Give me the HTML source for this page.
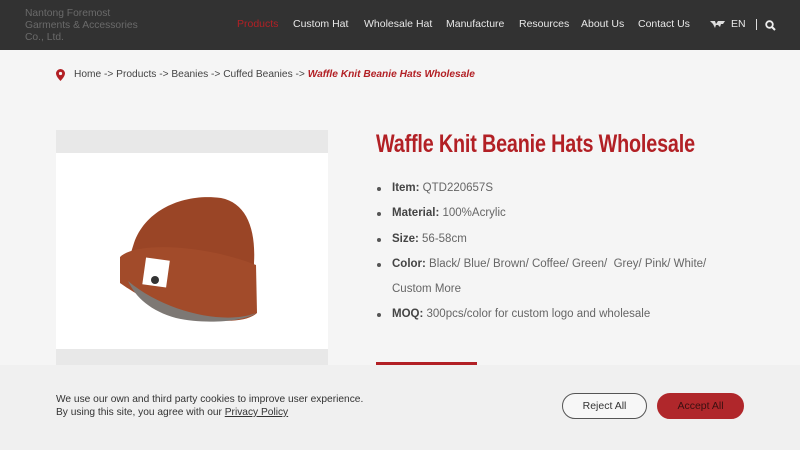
<!DOCTYPE html>
<html><head><meta charset="utf-8"><style>
*{margin:0;padding:0;box-sizing:border-box}
body{width:800px;height:450px;overflow:hidden;background:#f5f5f5;font-family:"Liberation Sans",sans-serif;position:relative}
.hdr{position:absolute;left:0;top:0;width:800px;height:50px;background:#323232}
.logo{position:absolute;left:25px;top:8px;color:#6a6a6a;font-size:10.3px;line-height:12px}
.nav{position:absolute;top:18px;font-size:10.5px;color:#e8e8e8;white-space:nowrap}
.bc{position:absolute;left:74px;top:69px;font-size:10.2px;color:#444;white-space:nowrap}
.bc b{color:#b22025;font-style:italic}
.pin{position:absolute;left:56px;top:69px}
.g1{position:absolute;left:56px;top:130px;width:272px;height:23px;background:#e8e8e8}
.wh{position:absolute;left:56px;top:153px;width:272px;height:196px;background:#fff}
.g2{position:absolute;left:56px;top:349px;width:272px;height:16px;background:#e8e8e8}
h1{position:absolute;left:376px;top:130px;font-size:25px;color:#b22025;font-weight:bold;white-space:nowrap;transform:scaleX(0.79);transform-origin:left;letter-spacing:-0.2px}
ul{position:absolute;left:376px;top:176px;list-style:none;font-size:11.5px;color:#666;line-height:25.3px;width:370px}
li{position:relative;padding-left:16px}
li:before{content:"";position:absolute;left:1px;top:11px;width:4px;height:4px;border-radius:50%;background:#555}
li b{color:#444}
.rl{position:absolute;left:376px;top:362px;width:101px;height:3px;background:#b22025}
.ck{position:absolute;left:0;top:365px;width:800px;height:85px;background:#f0f0f0}
.ct{position:absolute;left:56px;top:28px;font-size:10.2px;color:#333;line-height:13px;white-space:nowrap}
.ct u{color:#333}
.btn{position:absolute;top:28px;height:26px;width:85px;border-radius:13px;font-size:10.5px;text-align:center;line-height:24px}
</style></head><body>
<div class="hdr">
<div class="logo">Nantong Foremost<br>Garments &amp; Accessories<br>Co., Ltd.</div>
<span class="nav" style="left:237px;color:#b22025">Products</span>
<span class="nav" style="left:293px">Custom Hat</span>
<span class="nav" style="left:364px">Wholesale Hat</span>
<span class="nav" style="left:446px">Manufacture</span>
<span class="nav" style="left:519px">Resources</span>
<span class="nav" style="left:581px">About Us</span>
<span class="nav" style="left:638px">Contact Us</span>
<svg style="position:absolute;left:710px;top:20px" width="15" height="9"><path d="M0 1h5l1 3 2-3h7l-2 3-2 0-1 3-2-2-2 0-1 3-2-4z" fill="#ddd"/></svg>
<span class="nav" style="left:731px">EN</span>
<span style="position:absolute;left:756px;top:19px;width:1px;height:11px;background:#ddd"></span>
<svg style="position:absolute;left:765px;top:20px" width="11" height="11"><circle cx="4.5" cy="4.5" r="3.3" fill="none" stroke="#eee" stroke-width="1.8"/><path d="M7 7l3 3" stroke="#eee" stroke-width="2"/></svg>
</div>
<svg class="pin" width="9" height="12"><path d="M4.5 0a4.5 4.5 0 0 1 4.5 4.5c0 3-4.5 7.5-4.5 7.5S0 7.5 0 4.5A4.5 4.5 0 0 1 4.5 0z" fill="#b22025"/><circle cx="4.5" cy="4.5" r="1.6" fill="#f5f5f5"/></svg>
<div class="bc">Home -&gt; Products -&gt; Beanies -&gt; Cuffed Beanies -&gt; <b>Waffle Knit Beanie Hats Wholesale</b></div>
<div class="g1"></div><div class="wh">
<svg width="272" height="196" style="position:absolute;left:0;top:0">
<path d="M78 90 C90 55 130 40 165 45 C190 50 200 75 198 110 L200 150 C170 170 110 160 66 128Z" fill="#9a4526"/>
<path d="M64 104 C80 88 150 92 200 112 L201 160 C185 175 120 170 64 130Z" fill="#a24b2a"/>
<path d="M72 128 C110 160 170 172 200 160 C190 168 150 172 120 165 C95 158 80 145 72 128Z" fill="#7d7874"/>
<rect x="88" y="106" width="24" height="27" fill="#fff" transform="rotate(8 100 120)"/>
<circle cx="99" cy="127" r="4" fill="#333"/>
</svg></div><div class="g2"></div>
<h1>Waffle Knit Beanie Hats Wholesale</h1>
<ul>
<li><b>Item:</b> QTD220657S</li>
<li><b>Material:</b> 100%Acrylic</li>
<li><b>Size:</b> 56-58cm</li>
<li><b>Color:</b> Black/ Blue/ Brown/ Coffee/ Green/&nbsp; Grey/ Pink/ White/ Custom More</li>
<li><b>MOQ:</b> 300pcs/color for custom logo and wholesale</li>
</ul>
<div class="rl"></div>
<div class="ck">
<div class="ct">We use our own and third party cookies to improve user experience.<br>By using this site, you agree with our <u>Privacy Policy</u></div>
<div class="btn" style="left:562px;border:1px solid #555;color:#333;background:#f7f7f7">Reject All</div>
<div class="btn" style="left:657px;width:87px;background:#b0272b;color:#3a1010;border:1px solid #b0272b">Accept All</div>
</div>
</body></html>
